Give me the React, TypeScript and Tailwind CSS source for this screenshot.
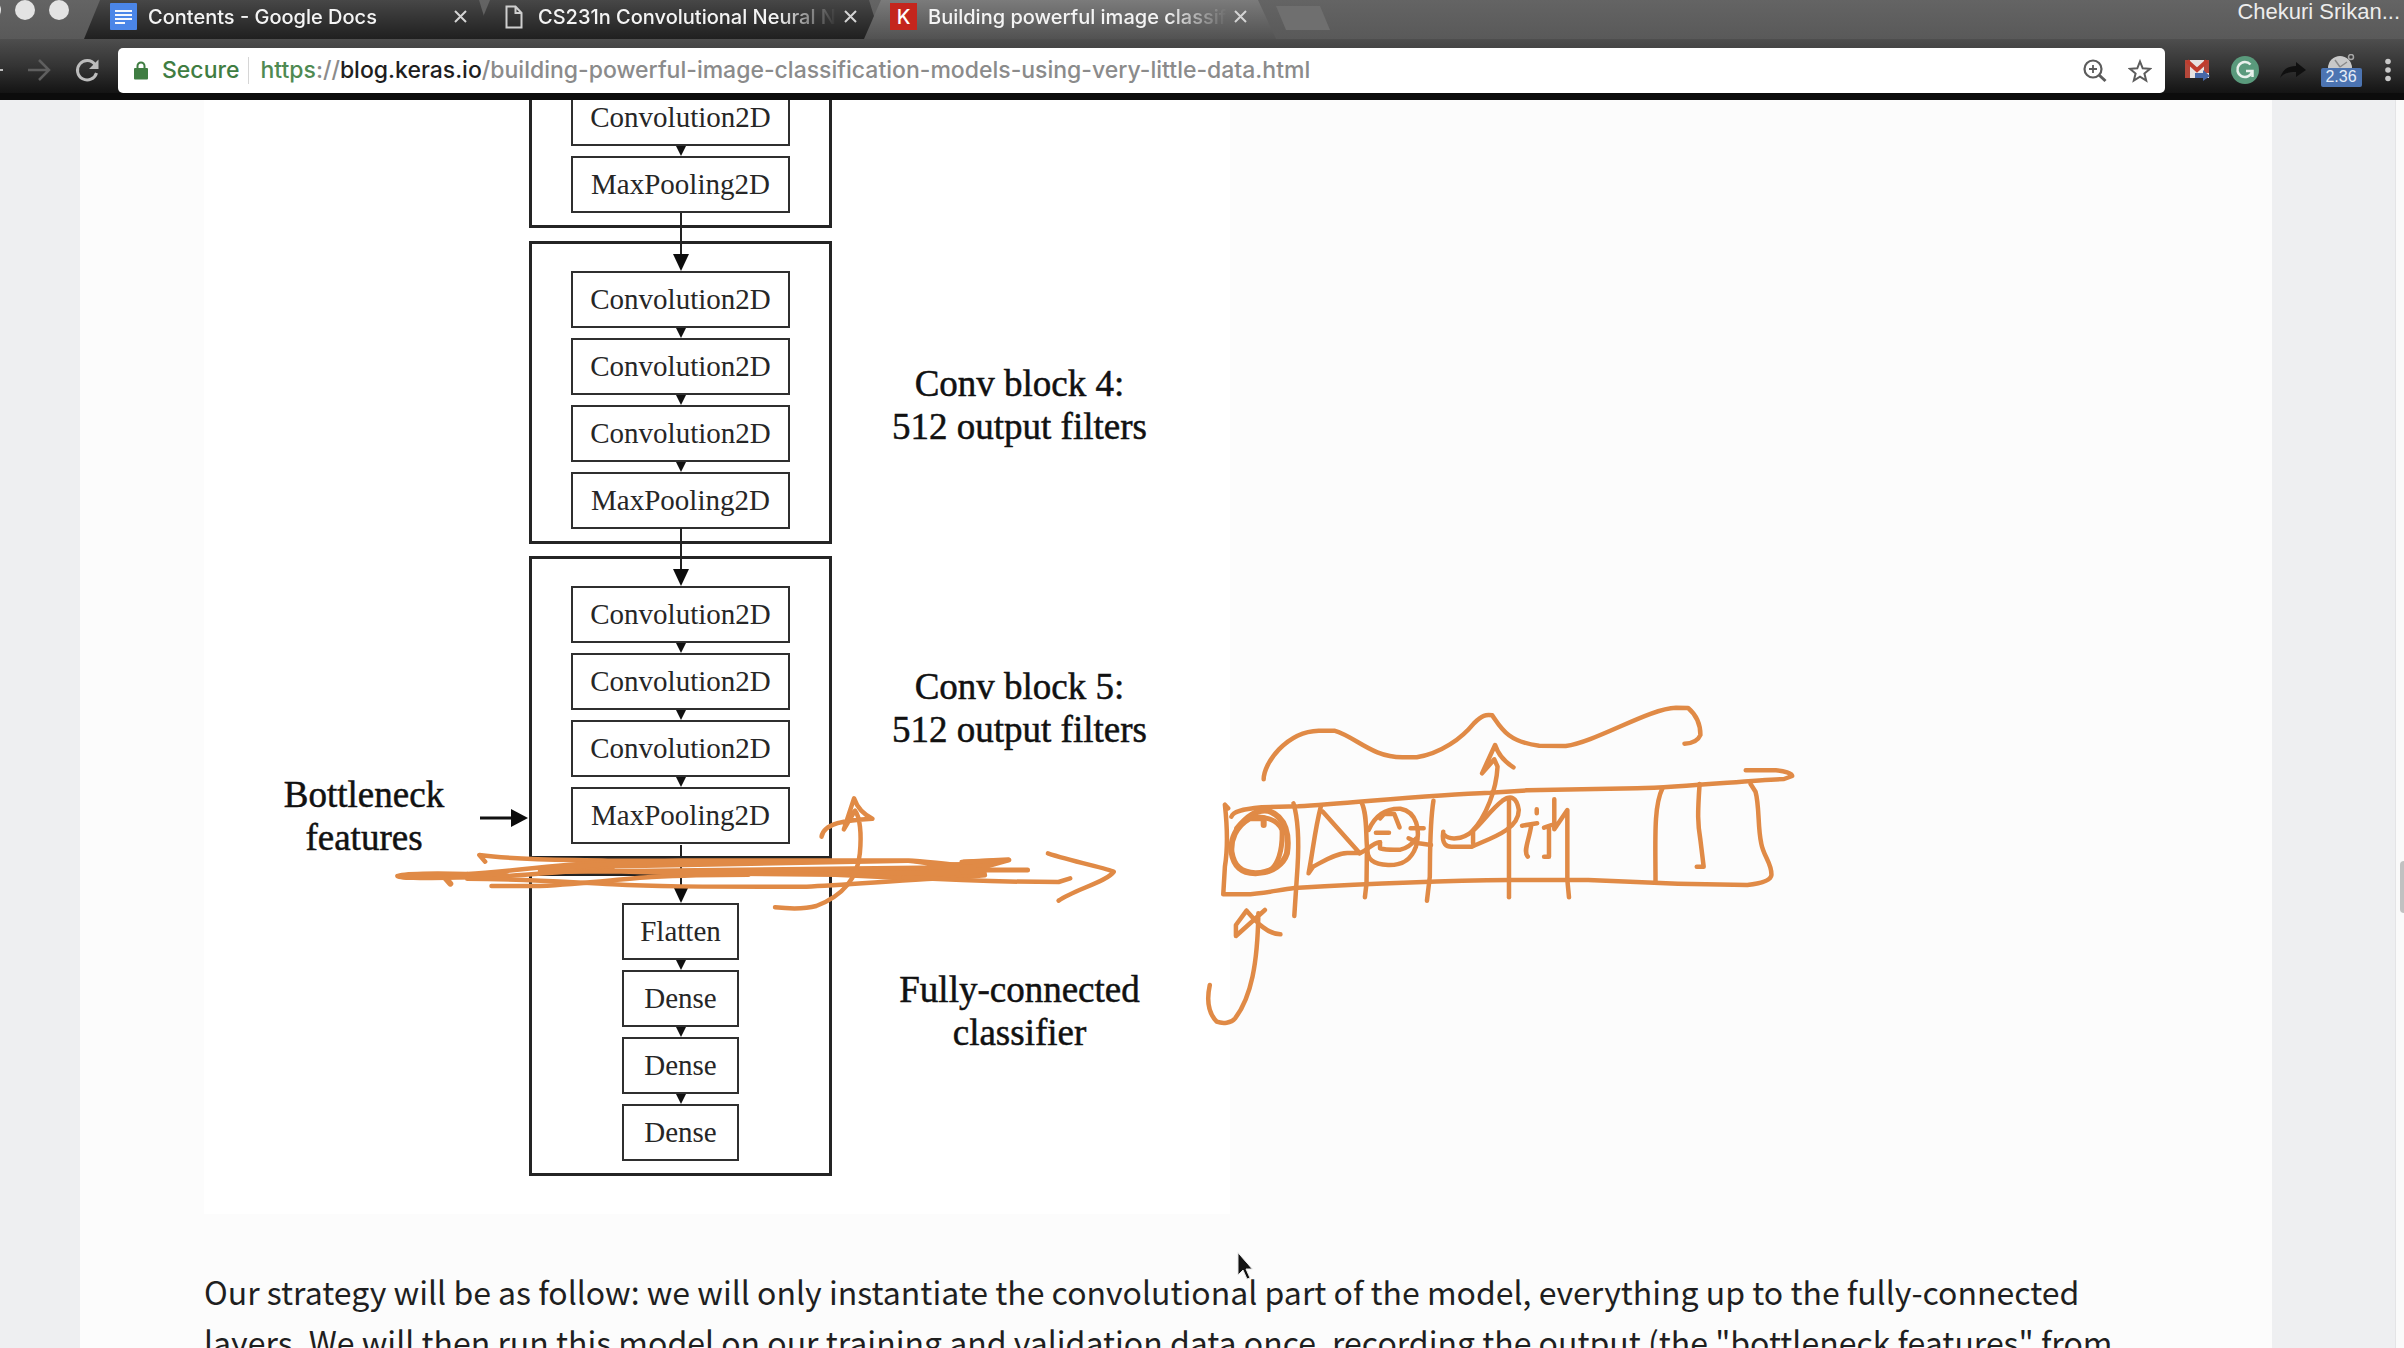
import React from "react";
import type { ReactNode } from "react";

/* ---------- browser chrome ---------- */

function CloseIcon() {
  return (
    <svg className="size-[13px]" viewBox="0 0 13 13" aria-hidden="true">
      <path d="M1 1 L12 12 M12 1 L1 12" stroke="#d4d4d4" strokeWidth="2" fill="none" />
    </svg>
  );
}

function DocsIcon() {
  return (
    <svg className="h-[27px] w-[27px]" viewBox="0 0 27 27" aria-hidden="true">
      <rect width="27" height="27" rx="1" fill="#4b86e8" />
      <path d="M5 8 H22 M5 12 H22 M5 16 H22 M5 20 H15" stroke="#f4f7fd" strokeWidth="2" />
    </svg>
  );
}

function PageIcon() {
  return (
    <svg className="h-[24px] w-[18px]" viewBox="0 0 18 24" aria-hidden="true">
      <path d="M1.5 1.5 H10.5 L16.5 8 V22.5 H1.5 Z M10.5 1.5 V8 H16.5" fill="none" stroke="#cfcfcf" strokeWidth="2" />
    </svg>
  );
}

function KerasIcon() {
  return (
    <span className="flex size-[27px] items-center justify-center bg-[#c4261d] text-xl font-medium text-white">K</span>
  );
}

function Tab({ title, icon, active = false }: { title: string; icon: ReactNode; active?: boolean }) {
  return (
    <div
      className={
        active
          ? "z-10 -ml-4 flex h-[39px] w-[412px] shrink-0 items-center bg-linear-to-b from-[#7b7b7b] to-[#525252] pr-[22px] pb-[6px] pl-[26px] [clip-path:polygon(17px_0,calc(100%-18px)_0,100%_100%,0_100%)]"
          : "-mr-px -ml-4 flex h-[39px] w-[407px] shrink-0 items-center bg-linear-to-b from-[#474747] to-[#202020] pr-[17px] pb-[6px] pl-[26px] [clip-path:polygon(16px_0,calc(100%-12px)_0,100%_100%,0_100%)]"
      }
    >
      <span className="flex w-[27px] shrink-0 justify-center">{icon}</span>
      <a
        href="#page"
        className="ml-[11px] w-[299px] shrink-0 text-xl leading-[26px] font-medium whitespace-nowrap text-[#f4f4f4] [mask-image:linear-gradient(to_right,black_80%,transparent)]"
      >
        {title}
      </a>
      <button type="button" aria-label={"Close " + title} className="flex h-[26px] w-[27px] shrink-0 items-center justify-center">
        <CloseIcon />
      </button>
    </div>
  );
}

function TabStrip() {
  return (
    <header className="flex h-[39px] items-start bg-linear-to-b from-[#646464] to-[#595959]">
      <div className="mr-4 flex w-[84px] shrink-0 justify-end gap-[14px] overflow-hidden pr-[15px]">
        <button type="button" aria-label="Close window" className="size-5 shrink-0 rounded-full bg-[#e3e3e3]" />
        <button type="button" aria-label="Minimize window" className="size-5 shrink-0 rounded-full bg-[#e3e3e3]" />
        <button type="button" aria-label="Zoom window" className="size-5 shrink-0 rounded-full bg-[#e3e3e3]" />
      </div>
      <Tab title="Contents - Google Docs" icon={<DocsIcon />} />
      <Tab title="CS231n Convolutional Neural N" icon={<PageIcon />} />
      <Tab title="Building powerful image classif" icon={<KerasIcon />} active />
      <button
        type="button"
        aria-label="New tab"
        className="mt-[6px] h-6 w-[54px] shrink-0 bg-[#6f6f6f] [clip-path:polygon(0_0,44px_0,100%_100%,10px_100%)]"
      />
      <p className="ml-auto pr-1 font-['Liberation_Sans',sans-serif] text-[22px] leading-6 text-[#ededed]">Chekuri Srikan...</p>
    </header>
  );
}

function Toolbar() {
  return (
    <nav className="flex h-[61px] items-center border-b-[7px] border-[#0c0c0c] bg-linear-to-b from-[#4e4e4e] via-[#343434] to-[#141414] pt-2">
      <div className="flex w-[118px] shrink-0 items-center">
        <button type="button" aria-label="Back" className="w-[27px]">
          <svg className="h-6 w-1" viewBox="0 0 4 24" aria-hidden="true">
            <path d="M0 12 H3" stroke="#bdbdbd" strokeWidth="2" />
          </svg>
        </button>
        <button type="button" aria-label="Forward" className="w-[46px]">
          <svg className="size-6" viewBox="0 0 24 24" fill="none" stroke="#5f5f5f" strokeWidth="2.5" aria-hidden="true">
            <path d="M1 12 H22 M12 2 L22 12 L12 22" />
          </svg>
        </button>
        <button type="button" aria-label="Reload">
          <svg className="size-7" viewBox="0 0 28 28" aria-hidden="true">
            <path d="M22 8.5 A9.7 9.7 0 1 0 23.5 17" fill="none" stroke="#bcbcbc" strokeWidth="3" />
            <path d="M25.500 3.500 V13 H16 Z" fill="#bcbcbc" />
          </svg>
        </button>
      </div>

      <div className="flex h-[45px] min-w-0 flex-1 items-center rounded-[5px] bg-white pt-px pl-4 text-[23px] font-medium">
        <button type="button" className="flex items-center gap-[14px] text-[#3f7d42]">
          <svg className="h-[19px] w-[14px]" viewBox="0 0 14 19" aria-hidden="true">
            <path d="M3.500 8 V5 A3.500 3.500 0 0 1 10.500 5 V8" fill="none" stroke="#3f7d42" strokeWidth="2" />
            <rect y="7" width="14" height="11.500" rx="1" fill="#3f7d42" />
          </svg>
          Secure
        </button>
        <span className="mr-[11px] ml-[9px] h-[27px] w-px bg-[#d6d6d6]" />
        <div role="textbox" aria-label="Address" className="min-w-0 flex-1 whitespace-nowrap text-[#8b8b8b]">
          <span className="text-[#4f8a52]">https</span>://<span className="text-[#1e1e1e]">blog.keras.io</span>
          /building-powerful-image-classification-models-using-very-little-data.html
        </div>
        <button type="button" aria-label="Zoom" className="flex w-[45px] justify-center">
          <svg className="size-6" viewBox="0 0 24 24" fill="none" stroke="#5c5c5c" aria-hidden="true">
            <circle cx="10" cy="10" r="8.500" strokeWidth="2.200" />
            <path d="M6 10 H14 M10 6 V14" strokeWidth="1.800" />
            <path d="M16 16 L22.500 22" strokeWidth="3" />
          </svg>
        </button>
        <button type="button" aria-label="Bookmark" className="mr-[3px] flex w-[45px] justify-center">
          <svg className="size-6" viewBox="0 0 24 24" fill="none" stroke="#5c5c5c" strokeWidth="2" aria-hidden="true">
            <path d="M12 2.500 L14.700 9.300 L22 9.800 L16.400 14.500 L18.200 21.600 L12 17.700 L5.800 21.600 L7.600 14.500 L2 9.800 L9.300 9.300 Z" />
          </svg>
        </button>
      </div>

      <div className="ml-2 flex shrink-0 items-center">
        <button type="button" aria-label="Mail" className="flex w-12 justify-center">
          <svg className="h-[22px] w-[26px]" viewBox="0 0 26 22" aria-hidden="true">
            <rect x="1" y="1" width="24" height="18" fill="#e6e2e1" />
            <path d="M1 1 H6 V19 H1 Z M20 1 H25 V14 H20 Z" fill="#b4473a" />
            <path d="M3 2 L13 11 L23 2" fill="none" stroke="#c03c2d" strokeWidth="4" />
            <path d="M11 14 H19 V11 L26 17 L19 22 V19 H11 Z" fill="#4668a8" />
          </svg>
        </button>
        <button type="button" aria-label="Grammar check" className="flex w-12 justify-center">
          <svg className="size-7" viewBox="0 0 28 28" aria-hidden="true">
            <circle cx="14" cy="14" r="14" fill="#5a9a7c" />
            <path d="M19.500 8.500 A7.500 7.500 0 1 0 21 16" fill="none" stroke="#e9f1ec" strokeWidth="2.500" />
            <path d="M15 15 H21.500 V21" fill="none" stroke="#e9f1ec" strokeWidth="2.500" />
          </svg>
        </button>
        <button type="button" aria-label="Share" className="flex w-12 justify-center">
          <svg className="h-4 w-[26px]" viewBox="0 0 26 16" aria-hidden="true">
            <path d="M0 16 C3 7 8 4 16 4 V0 L26 8 L16 15 V10 C9 10 4 11 0 16 Z" fill="#101010" />
          </svg>
        </button>
        <button type="button" aria-label="Speed" className="flex w-12 flex-col items-center">
          <svg className="h-[14px] w-7" viewBox="0 0 28 14" aria-hidden="true">
            <path d="M1 14 A12 12 0 0 1 25 14 Z" fill="#c9c9c9" />
            <path d="M13 13 L8 6 M13 13 L20 8" stroke="#8a8a8a" strokeWidth="1.500" />
            <circle cx="24" cy="3" r="2.500" fill="none" stroke="#a5a5a5" strokeWidth="1.500" />
          </svg>
          <span className="flex h-[19px] w-[41px] items-center justify-center rounded-xs bg-[#4c74b2] font-['Liberation_Sans',sans-serif] text-base text-[#e6edf7]">
            2.36
          </span>
        </button>
        <button type="button" aria-label="Menu" className="w-[39px] pl-5">
          <svg className="h-6 w-[6px]" viewBox="0 0 6 24" fill="#c9c9c9" aria-hidden="true">
            <circle cx="3" cy="3.500" r="2.800" />
            <circle cx="3" cy="12" r="2.800" />
            <circle cx="3" cy="20.500" r="2.800" />
          </svg>
        </button>
      </div>
    </nav>
  );
}

/* ---------- network diagram ---------- */

function Node({ label, narrow = false }: { label: string; narrow?: boolean }) {
  return (
    <div
      className={
        narrow
          ? "flex h-[57px] w-[117px] items-center justify-center border-2 border-[#2f2f2f]"
          : "flex h-[57px] w-[219px] items-center justify-center border-2 border-[#2f2f2f]"
      }
    >
      {label}
    </div>
  );
}

function ShortArrow() {
  return (
    <svg className="h-[10px] w-3" viewBox="0 0 12 10" aria-hidden="true">
      <path d="M1 0 H11 L6 10 Z" fill="#111" />
    </svg>
  );
}

interface BlockProps {
  layers: string[];
  caption?: string[];
  captionClass?: string;
  className: string;
  frameClass?: string;
  narrow?: boolean;
  linked?: boolean;
  left?: ReactNode;
}

function Block({ layers, caption = [], captionClass = "", className, frameClass = "border-[3px] pt-[27px]", narrow, linked, left }: BlockProps) {
  return (
    <div className={"flex " + className}>
      <div className="w-[325px] shrink-0">{left}</div>
      <div
        className={
          "relative flex w-[303px] shrink-0 flex-col items-center border-[#242424] pb-3 text-[29px] leading-none text-[#262626] " + frameClass
        }
      >
        {linked && (
          <svg className="absolute top-[-31px] left-1/2 h-[58px] w-4 -translate-x-1/2" viewBox="0 0 16 58" aria-hidden="true">
            <path d="M8 0 V42" stroke="#222" strokeWidth="2" />
            <path d="M0 41 H16 L8 58 Z" fill="#0c0c0c" />
          </svg>
        )}
        {layers.map((layer, i) => (
          <React.Fragment key={i}>
            {i > 0 && <ShortArrow />}
            <Node label={layer} narrow={narrow} />
          </React.Fragment>
        ))}
      </div>
      <div className={"w-[375px] text-center text-[37px] leading-[43px] text-[#111] [-webkit-text-stroke:0.5px_#111] " + captionClass}>
        {caption.map((line) => (
          <p key={line}>{line}</p>
        ))}
      </div>
    </div>
  );
}

const CONV = "Convolution2D";
const POOL = "MaxPooling2D";

function Bottleneck() {
  return (
    <div className="flex items-start pt-[217px] text-[#111]">
      <p className="ml-[70px] w-[180px] text-center text-[37px] leading-[43px] [-webkit-text-stroke:0.5px_#111]">
        Bottleneck features
      </p>
      <svg className="mt-9 ml-[26px] h-[18px] w-12" viewBox="0 0 48 18" aria-hidden="true">
        <path d="M0 9 H34" stroke="#111" strokeWidth="3" />
        <path d="M31 0 L48 9 L31 18 Z" fill="#0c0c0c" />
      </svg>
    </div>
  );
}

function NetworkFigure() {
  return (
    <figure className="w-[1026px] bg-white pb-[38px] font-['Liberation_Serif',serif]">
      <Block className="-mt-[11px]" frameClass="border-x-[3px] border-b-[3px]" layers={[CONV, POOL]} />
      <Block
        className="mt-[13px]"
        linked
        layers={[CONV, CONV, CONV, POOL]}
        caption={["Conv block 4:", "512 output filters"]}
        captionClass="pt-[121px]"
      />
      <Block
        className="mt-3"
        linked
        layers={[CONV, CONV, CONV, POOL]}
        caption={["Conv block 5:", "512 output filters"]}
        captionClass="pt-[109px]"
        left={<Bottleneck />}
      />
      <Block
        className="mt-[14px]"
        linked
        narrow
        layers={["Flatten", "Dense", "Dense", "Dense"]}
        caption={["Fully-connected", "classifier"]}
        captionClass="pt-[95px]"
      />
    </figure>
  );
}

/* ---------- pen strokes drawn over the page ---------- */

function Annotations() {
  return (
    <svg
      className="pointer-events-none absolute top-0 left-0 h-[1248px] w-[2404px]"
      viewBox="0 100 2404 1248"
      fill="none"
      stroke="#e08a46"
      strokeWidth="4.500"
      strokeLinecap="round"
      strokeLinejoin="round"
      aria-hidden="true"
    >
      {/* cut line with arrow, and the curl pointing up beside block 5 */}
      <svg x="380" y="780" width="760" height="160" viewBox="0 0 1568 480" preserveAspectRatio="none">
        <g className="[&>path]:[vector-effect:non-scaling-stroke]">
          <path d="M217 245 L205 225 C290 242 400 238 470 242 H1100 C1150 246 1180 256 1240 262" />
          <path d="M180 282 C260 278 340 255 470 247 C520 250 560 250 640 250" />
          <path d="M180 282 C120 279 45 280 36 288 C40 298 130 292 200 292 C300 288 380 272 480 268" />
          <path d="M145 311 L135 294 M150 288 H260" strokeWidth="6" />
          <path d="M180 296 C300 297 400 308 480 313 C560 320 640 320 880 320 C960 315 1100 298 1200 292" />
          <path d="M230 318 H330 C430 310 500 296 560 291 C620 286 680 284 760 284" />
          <path
            d="M330 270 C420 256 500 245 620 242 H1090 C1140 250 1180 262 1210 262 L1298 240 L1200 246 M1210 262 L1298 240 L1245 262 L1248 286 L1180 294 L1080 294 L940 284 L620 280 L480 274 L330 276 Z"
            fill="#e08a46"
          />
          <path d="M1204 246 L1296 239 M1200 270 H1336" strokeWidth="5" />
          <path d="M1080 292 C1200 302 1300 306 1400 306 L1424 295" />
          <path d="M1378 220 C1430 245 1500 265 1514 275 C1500 305 1430 330 1400 362" />
          <path d="M815 382 C850 387 880 386 900 378 C950 350 985 300 990 220 C994 160 990 110 980 92 L957 148 L978 55 C985 85 1000 105 1016 116 C960 120 915 130 911 170" />
        </g>
      </svg>

      {/* feature strip */}
      <svg x="1180" y="680" width="640" height="360" viewBox="0 0 1568 1080" preserveAspectRatio="none">
        <g className="[&>path]:[vector-effect:non-scaling-stroke]">
          <path d="M205 298 C205 250 260 155 340 152 H378 C430 170 470 232 545 232 H580 C640 220 690 175 720 130 C740 105 750 103 765 106 C785 140 800 185 880 197 L945 198 C1020 185 1150 85 1215 83 L1245 84 C1265 105 1275 130 1275 165 C1270 180 1255 190 1236 191" />
          <path d="M118 385 L110 374 C115 430 118 500 110 560 L106 643 H160 C200 642 240 630 280 624 C450 612 640 602 810 600 H1000 C1080 604 1160 608 1220 611 L1390 615 C1425 610 1448 600 1449 585 C1450 550 1430 530 1424 490 C1415 440 1420 380 1410 335 L1398 312" />
          <path d="M126 410 C130 395 150 388 200 382 L290 379 C420 370 600 345 760 338 L850 331 L1120 325 C1250 320 1400 300 1480 297 L1500 288 C1500 280 1480 272 1460 271 H1386" />
          <path d="M205 435 V415 H170 C135 440 124 480 126 515 C132 560 150 578 185 580 C230 578 254 550 262 520 C268 470 262 410 215 392 C185 386 160 415 140 445" strokeWidth="6" />
          <path d="M165 415 C200 405 238 415 250 450 C252 510 240 560 215 575" strokeWidth="5" />
          <path d="M278 370 C290 420 292 480 288 560 L280 708" />
          <path d="M345 380 C330 450 325 520 315 580 L326 560 C350 545 380 520 410 519 H440 L350 395" />
          <path d="M440 520 C460 510 470 490 490 487" />
          <path d="M445 368 C458 400 455 450 458 500 L457 610 L453 652" />
          <path d="M621 362 C612 430 613 500 612 590 L605 662" />
          <path d="M806 360 V652" />
          <path d="M462 450 C480 400 510 385 540 386 C580 395 590 450 578 500 C565 545 540 556 510 555 C475 553 455 540 460 500" />
          <path d="M480 458 H512 M490 415 L500 402 H525 L538 442 M565 445 H597 M490 487 V505 C505 510 525 510 540 509 C570 500 573 480 578 476 M560 475 L585 490 L615 495" />
          <path d="M645 455 C640 495 655 500 665 500 H715 C760 475 830 450 830 390 C825 350 810 345 790 362 C760 390 740 430 715 455 C690 480 660 480 648 465 M718 455 V490" />
          <path d="M715 455 C750 410 775 330 778 260 L770 238 L740 280 L772 195 C780 225 795 245 817 262" />
          <path d="M874 388 V400 M838 437 L875 430 M860 440 C855 480 840 515 852 530 M892 443 L910 435 M904 440 V530 H892 M917 358 V448 L949 390 V600 L953 652" />
          <path d="M1182 325 C1160 380 1165 480 1165 605 M1273 312 C1268 400 1268 430 1275 480 L1283 560 H1266" />
          <path d="M73 915 C65 960 70 1000 90 1025 C105 1032 125 1030 135 1015 C175 950 190 850 192 700 M163 692 L137 735 V768 L208 690 M163 692 C190 730 215 762 246 763" />
        </g>
      </svg>

      {/* mouse pointer */}
      <path
        d="M1238 1253 V1275 L1243 1270 L1247 1279 L1250 1278 L1246 1269 H1252 Z"
        fill="#111"
        stroke="#e6e6e6"
        strokeWidth="1"
      />
    </svg>
  );
}

export default function App() {
  return (
    <div className="flex h-screen flex-col overflow-hidden font-[Inter,sans-serif]">
      <TabStrip />
      <Toolbar />
      <main id="page" className="relative flex min-h-0 flex-1 overflow-hidden bg-[#eeeff1]">
        <article className="ml-20 min-w-0 flex-1 bg-[#fcfcfc] px-[124px]">
          <NetworkFigure />
          <p className="mt-[52px] font-['Noto_Sans_CJK_SC',sans-serif] text-[32px] leading-[50px] text-[#1f1f1f]">
            Our strategy will be as follow: we will only instantiate the convolutional part of the model, everything up to the
            fully-connected layers. We will then run this model on our training and validation data once, recording the output
            (the "bottleneck features" from
          </p>
        </article>
        <div className="w-[123px] shrink-0" />
        <div className="flex w-[9px] shrink-0 flex-col items-end border-l border-[#e4e4e6] bg-[#fafafa] pt-[761px]">
          <div className="h-[52px] w-1 rounded-l-full bg-[#c1c1c1]" />
        </div>
        <Annotations />
      </main>
    </div>
  );
}
